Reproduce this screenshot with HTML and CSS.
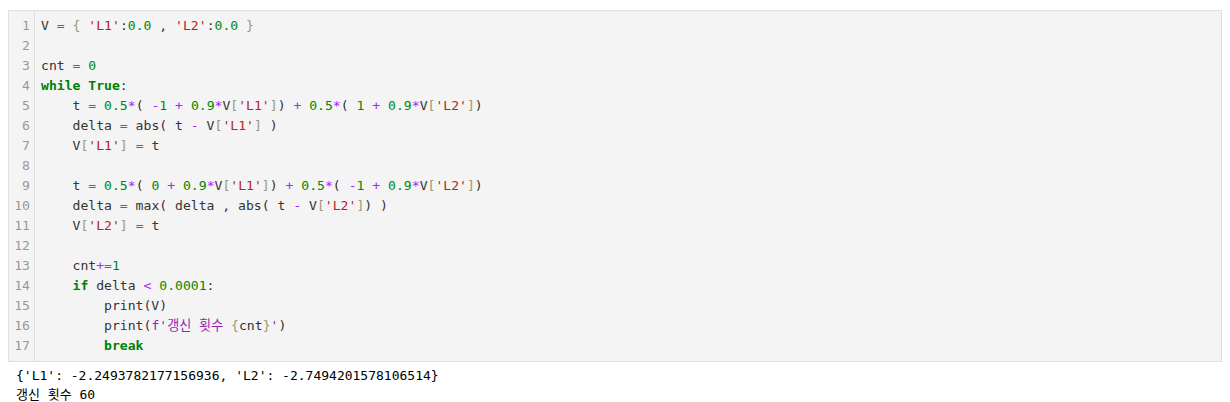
FILE: index.html
```html
<!DOCTYPE html>
<html>
<head>
<meta charset="utf-8">
<link rel="stylesheet" href="styles.css">
</head>
<body>
<div class="page">
  <div class="cell">
    <div class="gutter">
      <div>1</div><div>2</div><div>3</div><div>4</div><div>5</div><div>6</div><div>7</div><div>8</div><div>9</div><div>10</div><div>11</div><div>12</div><div>13</div><div>14</div><div>15</div><div>16</div><div>17</div>
    </div>
    <div class="code">
<div class="ln">V <span class="o">=</span> <span class="b">{</span> <span class="s">'L1'</span>:<span class="n">0.0</span> , <span class="s">'L2'</span>:<span class="n">0.0</span> <span class="b">}</span></div>
<div class="ln"> </div>
<div class="ln">cnt <span class="o">=</span> <span class="n">0</span></div>
<div class="ln"><span class="k">while</span> <span class="k">True</span>:</div>
<div class="ln">    t <span class="o">=</span> <span class="n">0.5</span><span class="o">*</span>( <span class="o">-</span><span class="n">1</span> <span class="o">+</span> <span class="n">0.9</span><span class="o">*</span>V<span class="b">[</span><span class="s">'L1'</span><span class="b">]</span>) <span class="o">+</span> <span class="n">0.5</span><span class="o">*</span>( <span class="n">1</span> <span class="o">+</span> <span class="n">0.9</span><span class="o">*</span>V<span class="b">[</span><span class="s">'L2'</span><span class="b">]</span>)</div>
<div class="ln">    delta <span class="o">=</span> abs( t <span class="o">-</span> V<span class="b">[</span><span class="s">'L1'</span><span class="b">]</span> )</div>
<div class="ln">    V<span class="b">[</span><span class="s">'L1'</span><span class="b">]</span> <span class="o">=</span> t</div>
<div class="ln"> </div>
<div class="ln">    t <span class="o">=</span> <span class="n">0.5</span><span class="o">*</span>( <span class="n">0</span> <span class="o">+</span> <span class="n">0.9</span><span class="o">*</span>V<span class="b">[</span><span class="s">'L1'</span><span class="b">]</span>) <span class="o">+</span> <span class="n">0.5</span><span class="o">*</span>( <span class="o">-</span><span class="n">1</span> <span class="o">+</span> <span class="n">0.9</span><span class="o">*</span>V<span class="b">[</span><span class="s">'L2'</span><span class="b">]</span>)</div>
<div class="ln">    delta <span class="o">=</span> max( delta , abs( t <span class="o">-</span> V<span class="b">[</span><span class="s">'L2'</span><span class="b">]</span>) )</div>
<div class="ln">    V<span class="b">[</span><span class="s">'L2'</span><span class="b">]</span> <span class="o">=</span> t</div>
<div class="ln"> </div>
<div class="ln">    cnt<span class="o">+=</span><span class="n">1</span></div>
<div class="ln">    <span class="k">if</span> delta <span class="o">&lt;</span> <span class="n">0.0001</span>:</div>
<div class="ln">        print(V)</div>
<div class="ln">        print(<span class="f">f'갱신 횟수 </span><span class="b">{</span>cnt<span class="b">}</span><span class="f">'</span>)</div>
<div class="ln">        <span class="k">break</span></div>
    </div>
  </div>
  <div class="output">
<div class="ln">{'L1': -2.2493782177156936, 'L2': -2.7494201578106514}</div>
<div class="ln">갱신 횟수 60</div>
  </div>
</div>
</body>
</html>
```
FILE: styles.css
```css
html, body {
  margin: 0;
  padding: 0;
  background: #ffffff;
}
.page {
  padding: 10px 8px 0 8px;
}
.cell {
  display: flex;
  background: #f4f4f4;
  border: 1px solid #dfdfdf;
  font-family: "DejaVu Sans Mono", "Noto Sans CJK KR", monospace;
  font-size: 13.1px;
  line-height: 20px;
  color: #333333;
}
.gutter {
  width: 21px;
  padding: 5px 4px 5px 0;
  text-align: right;
  color: #999999;
  border-right: 1px solid #dddddd;
}
.code {
  flex: 1;
  padding: 5px 0 5px 6px;
}
.ln {
  height: 20px;
  white-space: pre;
}
.o { color: #aa22ff; }
.b { color: #999977; }
.s { color: #ba2121; }
.n { color: #008800; }
.k { color: #008000; font-weight: bold; }
.f { color: #9a1fb0; }
.output {
  padding: 4px 0 0 8px;
  font-family: "DejaVu Sans Mono", "Noto Sans CJK KR", monospace;
  font-size: 13px;
  line-height: 19px;
  color: #000000;
}
.output .ln { height: 19px; }
```
